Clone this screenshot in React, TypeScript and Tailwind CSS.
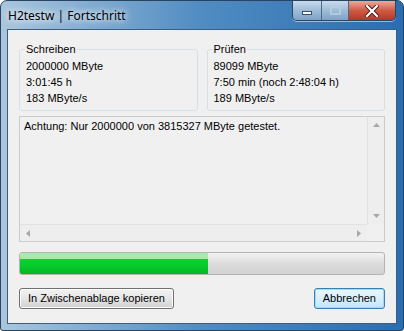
const font = { fontFamily: '"Liberation Sans", Arial, sans-serif' };

function TitleButtons() {
    return (
        <div className="flex self-start mr-[7px] h-[20px] rounded-b-[5px] border border-t-0 border-[#2b4563] overflow-hidden shadow-[0_1px_0_rgba(255,255,255,0.5)]">
            <div className="w-[29px] flex items-center justify-center bg-gradient-to-b from-[#c9dcec] via-[#9ebcd8] to-[#7ea3c6] border-r border-[#4c6a88]">
                <div className="w-[10px] h-[4px] bg-white border border-[#34506e] mt-[4px]" />
            </div>
            <div className="w-[27px] flex items-center justify-center bg-gradient-to-b from-[#c9dcec] via-[#9ebcd8] to-[#7ea3c6] border-r border-[#4c6a88]">
                <div className="w-[11px] h-[9px] border-2 border-[#b9cde0] opacity-80" />
            </div>
            <div className="w-[46px] flex items-center justify-center bg-gradient-to-b from-[#e9a99a] via-[#cf5b45] to-[#b73621]">
                <svg width="14" height="12" viewBox="0 0 14 12">
                    <path d="M2 1 L12 11 M12 1 L2 11" stroke="#3b1a14" strokeWidth="4" strokeLinecap="square" />
                    <path d="M2 1 L12 11 M12 1 L2 11" stroke="#ffffff" strokeWidth="2.2" strokeLinecap="square" />
                </svg>
            </div>
        </div>
    );
}

function Group({ title, lines }: { title: string; lines: string[] }) {
    return (
        <fieldset className="border border-[#d5dfe5] rounded-[3px] pl-[6px] pr-[4px] pb-[4px] pt-[2px] min-w-0">
            <legend className="ml-[-1px] px-[1px] text-[11px] leading-[13px]">{title}</legend>
            {lines.map((l) => (
                <div key={l} className="text-[11px] leading-[16px] whitespace-nowrap">{l}</div>
            ))}
        </fieldset>
    );
}

function Arrow({ dir }: { dir: 'up' | 'down' | 'left' | 'right' }) {
    const d = {
        up: 'M0 4 L3.5 0 L7 4 Z',
        down: 'M0 0 L3.5 4 L7 0 Z',
        left: 'M4 0 L0 3.5 L4 7 Z',
        right: 'M0 0 L4 3.5 L0 7 Z',
    }[dir];
    const vertical = dir === 'up' || dir === 'down';
    return (
        <svg width={vertical ? 7 : 4} height={vertical ? 4 : 7} viewBox={vertical ? '0 0 7 4' : '0 0 4 7'}>
            <path d={d} fill="#a7a7a7" />
        </svg>
    );
}

function Button({ label, focused }: { label: string; focused?: boolean }) {
    return (
        <button
            className={
                'h-[21px] rounded-[3px] border text-[11px] leading-[13px] px-[8px] ' +
                (focused
                    ? 'border-[#3c7fb1] bg-gradient-to-b from-[#eaf6fd] via-[#d9f0fc] to-[#bee6fd] shadow-[inset_0_0_0_1px_#9ddcf7]'
                    : 'border-[#707070] bg-gradient-to-b from-[#f2f2f2] via-[#e6e6e6] to-[#d0d0d0] shadow-[inset_0_0_0_1px_#fcfcfc]')
            }
            style={font}
        >
            {label}
        </button>
    );
}

export default function App() {
    return (
        <div className="w-[404px] h-[331px] bg-white">
            <div className="w-[404px] h-[331px] flex flex-col rounded-t-[7px] rounded-b-[3px] border border-[#2a4460] bg-gradient-to-r from-[#a9c6dd] via-[#4f8cc2] to-[#2a6db0]">
                {/* Title bar */}
                <div className="h-[28px] flex items-start justify-between">
                    <div
                        className="mt-[7px] ml-[7px] text-[12px] leading-[15px] text-black [text-shadow:0_0_6px_#ffffff,0_0_10px_#ffffff]"
                        style={{ fontFamily: '"Noto Sans", "Open Sans", sans-serif' }}
                    >
                        H2testw | Fortschritt
                    </div>
                    <TitleButtons />
                </div>

                {/* Client area */}
                <div
                    className="flex-1 mx-[6px] mb-[6px] border border-[#3f5d7c] bg-[#f0f0f0] pl-[11px] pr-[11px] pt-[13px] flex flex-col text-black"
                    style={font}
                >
                    <div className="grid grid-cols-2 gap-[9px]">
                        <Group title="Schreiben" lines={['2000000 MByte', '3:01:45 h', '183 MByte/s']} />
                        <Group title="Prüfen" lines={['89099 MByte', '7:50 min (noch 2:48:04 h)', '189 MByte/s']} />
                    </div>

                    {/* Log box */}
                    <div className="mt-[5px] h-[126px] border border-[#c9cdd2] flex flex-col">
                        <div className="flex-1 flex min-h-0">
                            <div className="flex-1 px-[4px] pt-[2px] text-[11px] leading-[14px]">
                                Achtung: Nur 2000000 von 3815327 MByte getestet.
                            </div>
                            <div className="w-[17px] flex flex-col justify-between items-center bg-[#eeeeee] border-l border-[#e2e2e2] py-[6px]">
                                <Arrow dir="up" />
                                <Arrow dir="down" />
                            </div>
                        </div>
                        <div className="h-[17px] flex">
                            <div className="flex-1 flex items-center justify-between px-[6px] bg-[#eeeeee] border-t border-[#e2e2e2]">
                                <Arrow dir="left" />
                                <Arrow dir="right" />
                            </div>
                            <div className="w-[17px] bg-[#f0f0f0]" />
                        </div>
                    </div>

                    {/* Progress */}
                    <div className="mt-[10px] h-[23px] rounded-[3px] border border-[#b4b4b4] bg-gradient-to-b from-[#f3f3f3] via-[#dcdcdc] to-[#d2d2d2] flex overflow-hidden">
                        <div className="w-[188px] h-full flex flex-col">
                            <div className="h-[6px] bg-[#a6eab0]" />
                            <div className="flex-1 bg-gradient-to-b from-[#08d42f] via-[#06c929] to-[#05b625]" />
                        </div>
                    </div>

                    {/* Buttons */}
                    <div className="mt-[13px] flex justify-between">
                        <Button label="In Zwischenablage kopieren" />
                        <Button label="Abbrechen" focused />
                    </div>
                </div>
            </div>
        </div>
    );
}
